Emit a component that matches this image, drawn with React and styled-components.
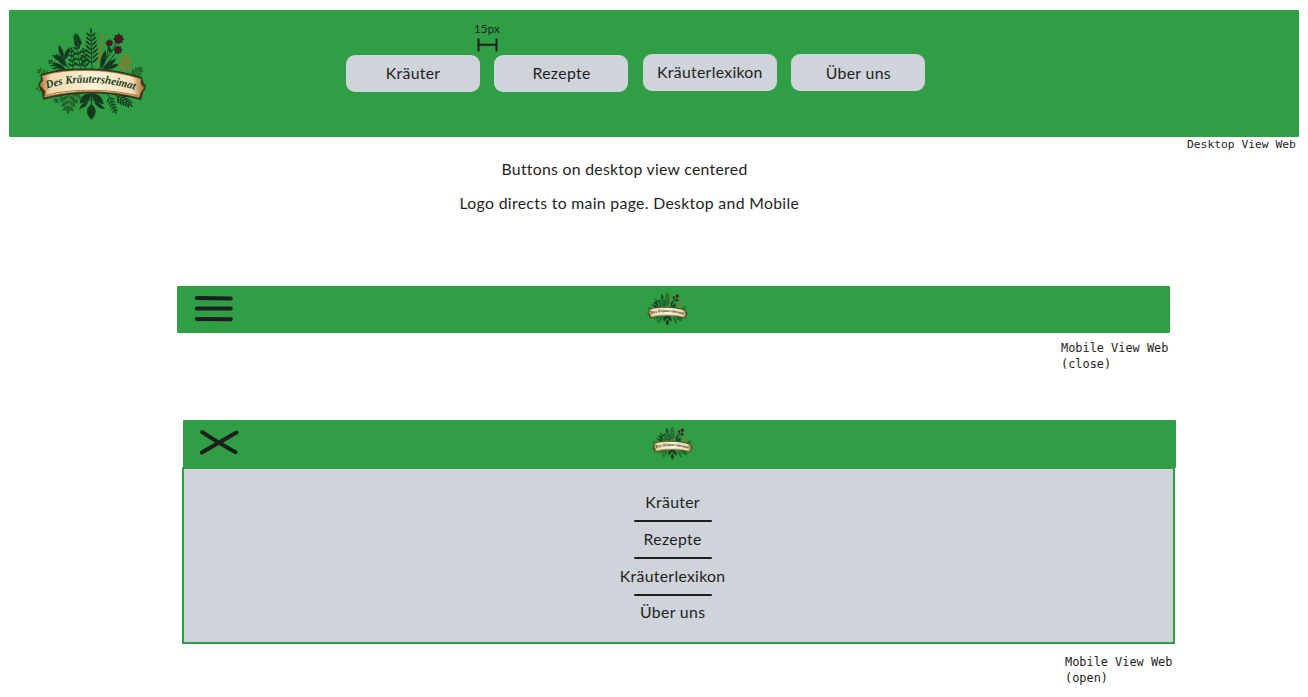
import React from "react";
import styled, { createGlobalStyle } from "styled-components";

const GREEN = "#2f9e44";
const GREY = "#ced4da";
const INK = "#1e1e1e";

const GlobalStyle = createGlobalStyle`
  * { box-sizing: border-box; }
  body { margin: 0; background: #fff; color: ${INK}; }
`;

const Board = styled.main`
  display: flex;
  flex-direction: column;
  width: 1308px;
  height: 697px;
  padding-top: 10px;
  overflow: hidden;
  font: 15.8px/20px Lato, sans-serif;
`;

const DesktopHeader = styled.header`
  display: flex;
  flex: none;
  align-items: flex-start;
  width: 1290px;
  height: 127px;
  margin-left: 9px;
  padding: 15px 0 0 24px;
  border-radius: 1px;
  background: ${GREEN};
`;

const LogoLink = styled.a`
  display: block;
  flex: none;
  width: ${(p) => p.$width}px;
  height: ${(p) => p.$width * 0.8406}px;
  svg { display: block; width: 100%; height: 100%; overflow: visible; }
`;

const Nav = styled.nav`
  position: relative;
  display: flex;
  gap: 14.4px;
  margin: 29.5px 0 0 198px;
`;

const NavButton = styled.button`
  width: 134px;
  height: 37px;
  margin: ${(p) => p.$lift || 0}px 0 0;
  padding: 0;
  border: 0;
  border-radius: 9px;
  background: ${GREY};
  color: ${INK};
  font: inherit;
  text-align: center;
`;

const Label = styled.span`
  letter-spacing: ${(p) => p.$track || 0}px;
  margin-right: ${(p) => -(p.$track || 0)}px;
  white-space: nowrap;
`;

const Measure = styled.div`
  position: absolute;
  left: 125.5px;
  top: -33px;
  width: 31px;
  display: flex;
  flex-direction: column;
  align-items: center;
  font-size: 11.5px;
  letter-spacing: 0.15px;
  line-height: 14px;
  svg { margin-top: 2px; }
`;

const Notes = styled.section`
  display: flex;
  flex: none;
  flex-direction: column;
  gap: 14px;
  width: 342px;
  height: 148.5px;
  margin-left: 459.5px;
  padding-top: 22px;
`;

const Note = styled.p`
  margin: 0 0 0 ${(p) => p.$indent || 0}px;
  white-space: nowrap;
`;

const Caption = styled.p`
  flex: none;
  width: 118px;
  height: ${(p) => p.$height}px;
  margin: 0 0 0 ${(p) => p.$left}px;
  padding-top: ${(p) => p.$top}px;
  font: ${(p) => p.$size || 11.9}px/16px "DejaVu Sans Mono", monospace;
  white-space: pre-line;
`;

const MobileBar = styled.header`
  display: flex;
  flex: none;
  align-items: flex-start;
  width: 993px;
  height: ${(p) => p.$height}px;
  margin-left: ${(p) => p.$left}px;
  padding-left: 17px;
  border-radius: 1px;
  background: ${GREEN};
`;

const IconButton = styled.button`
  display: block;
  width: 40px;
  height: 46px;
  padding: 0;
  border: 0;
  background: none;
  svg { display: block; }
`;

const BarLogo = styled.div`
  margin: 5.5px 0 0 411.3px;
`;

const Menu = styled.nav`
  display: flex;
  flex: none;
  flex-direction: column;
  align-items: center;
  width: 993px;
  height: 177px;
  margin: -1px 0 0 182px;
  padding: 23px 12px 0 0;
  border: 2px solid ${GREEN};
  background: ${GREY};
`;

const MenuItem = styled.a`
  height: 20px;
`;

const Divider = styled.hr`
  width: 78px;
  height: 2px;
  margin: 8.4px 0 6.4px;
  border: 0;
  border-radius: 1px;
  background: ${INK};
`;

function Leaf({ x, y, angle, length, width, fill }) {
  return (
    <path
      transform={`translate(${x} ${y}) rotate(${angle})`}
      d={`M0 0Q${length * 0.45} ${-width} ${length} 0Q${length * 0.45} ${width} 0 0`}
      fill={fill}
    />
  );
}

function Sprig({ from, to, pairs, length, width, spread = 48, fill, start = 0.2 }) {
  const dx = to[0] - from[0];
  const dy = to[1] - from[1];
  const heading = (Math.atan2(dy, dx) * 180) / Math.PI;
  const leaves = [];
  for (let i = 0; i < pairs; i++) {
    const t = start + ((0.92 - start) * i) / Math.max(1, pairs - 1);
    const size = length * (1.1 - 0.5 * t);
    [-1, 1].forEach((side) =>
      leaves.push(
        <Leaf key={`${i}${side}`} x={from[0] + dx * t} y={from[1] + dy * t}
          angle={heading + side * spread} length={size} width={width} fill={fill} />
      )
    );
  }
  return (
    <g>
      <path d={`M${from}L${to}`} stroke={fill} strokeWidth="2.5" />
      {leaves}
      <Leaf x={to[0]} y={to[1]} angle={heading} length={length * 0.6} width={width} fill={fill} />
    </g>
  );
}

function Blossom({ x, y, r }) {
  return (
    <g>
      {[0, 45, 90, 135, 180, 225, 270, 315].map((a) => (
        <Leaf key={a} x={x} y={y} angle={a} length={r} width={r * 0.6} fill="#3c2023" />
      ))}
      <circle cx={x} cy={y} r={r * 0.55} fill="#481b25" />
    </g>
  );
}

function Logo({ id, width }) {
  const dark = "#14391f";
  const mid = "#23642c";
  const rust = "#a4702a";
  return (
    <LogoLink $width={width} href="#" aria-label="Des Kräutersheimat">
      <svg viewBox="100 75 345 290" fill="none">
        <defs>
          <linearGradient id={`${id}-paper`} x1="120" x2="435" y1="0" y2="0" gradientUnits="userSpaceOnUse">
            <stop stopColor="#a46b36" />
            <stop offset=".1" stopColor="#f0d9ad" />
            <stop offset=".5" stopColor="#fff4d8" />
            <stop offset=".88" stopColor="#f3dfb9" />
            <stop offset="1" stopColor="#9b5f2c" />
          </linearGradient>
          <path id={`${id}-line`} d="M141 266C190 250 236 247 282 248C330 251 370 258 411 272" />
        </defs>
        <Sprig from={[150, 234]} to={[122, 214]} pairs={3} length={20} width={7} fill={mid} />
        <Sprig from={[395, 232]} to={[419, 211]} pairs={3} length={23} width={8} fill={mid} />
        <Sprig from={[128, 272]} to={[113, 266]} pairs={2} length={11} width={4} fill={mid} />
        <Sprig from={[428, 274]} to={[436, 256]} pairs={2} length={10} width={4} fill={mid} />
        <Sprig from={[188, 218]} to={[153, 186]} pairs={4} length={17} width={5} fill={dark} />
        <Leaf x={199} y={210} angle={-151} length={47} width={13} fill={dark} />
        <Leaf x={199} y={200} angle={-128} length={50} width={15} fill={dark} />
        <Leaf x={194} y={184} angle={-153} length={41} width={13} fill={dark} />
        <Leaf x={191} y={176} angle={-108} length={44} width={13} fill={dark} />
        <Leaf x={194} y={180} angle={-68} length={41} width={13} fill={dark} />
        <path d="M214 216Q196 192 189 168" stroke={dark} strokeWidth="3" />
        <Sprig from={[244, 212]} to={[231, 143]} pairs={4} length={25} width={6} fill={dark} />
        <Sprig from={[240, 146]} to={[229, 109]} pairs={6} length={17} width={6} fill={dark} />
        <Sprig from={[220, 212]} to={[215, 152]} pairs={4} length={18} width={6} fill={dark} />
        <Sprig from={[258, 212]} to={[251, 154]} pairs={4} length={19} width={6} fill={dark} />
        <Sprig from={[277, 212]} to={[274, 102]} pairs={7} length={32} width={6} spread={48} fill={dark} />
        <Sprig from={[294, 202]} to={[308, 103]} pairs={11} length={9} width={4} spread={20} fill={rust} />
        <path d="M298 208C315 180 337 160 355 118M307 205C321 176 326 153 328 130M310 208C326 187 340 168 356 150" stroke={dark} strokeWidth="3" />
        <Leaf x={303} y={205} angle={-75} length={58} width={14} fill={dark} />
        <Leaf x={308} y={209} angle={-38} length={54} width={13} fill={dark} />
        <Leaf x={314} y={209} angle={-21} length={48} width={12} fill={dark} />
        <Leaf x={336} y={159} angle={-120} length={24} width={9} fill={dark} />
        <Blossom x={357} y={117} r={17} />
        <Blossom x={329} y={129} r={12} />
        <Blossom x={355} y={150} r={14} />
        <Sprig from={[372, 218]} to={[380, 177]} pairs={3} length={31} width={6} spread={56} fill="#b56b25" />
        <Sprig from={[208, 276]} to={[206, 322]} pairs={3} length={36} width={11} fill={mid} />
        <Sprig from={[190, 286]} to={[172, 300]} pairs={2} length={18} width={8} fill={mid} />
        <Sprig from={[239, 278]} to={[228, 300]} pairs={2} length={22} width={9} fill={mid} />
        <Sprig from={[325, 283]} to={[346, 333]} pairs={5} length={18} width={5} fill={dark} />
        <Sprig from={[345, 284]} to={[388, 312]} pairs={5} length={24} width={6} fill={dark} />
        <path d="M275 278V343M275 296L239 328M275 296L314 326" stroke={dark} strokeWidth="3" />
        <Leaf x={275} y={280} angle={139} length={47} width={21} fill={dark} />
        <Leaf x={275} y={280} angle={41} length={50} width={21} fill={dark} />
        <Leaf x={265} y={307} angle={145} length={32} width={11} fill={dark} />
        <Leaf x={283} y={306} angle={34} length={39} width={11} fill={dark} />
        <Leaf x={275} y={312} angle={90} length={47} width={26} fill={dark} />
        <path d="M125 224C180 206 225 207 275 207C330 208 383 219 425 232L429 245L437 262L429 277L423 299C377 286 330 279 277 279C224 279 178 285 131 298L129 278L116 253L125 241Z" fill="#573216" stroke="#153c20" strokeWidth="3" />
        <path d="M128 228C180 211 225 212 275 212C330 213 381 223 422 237L423 253L432 263L422 278L418 292C375 281 330 274 277 274C224 274 180 280 135 291L138 274L121 254L131 242Z" fill={`url(#${id}-paper)`} stroke="#c69155" strokeWidth="2" />
        <path d="M137 287C182 273 230 271 278 271C330 271 373 277 416 288" stroke="#a77842" strokeWidth="3" />
        <text fill="#173d1d" fontFamily="Liberation Serif, serif" fontSize="34" fontStyle="italic" fontWeight="700">
          <textPath href={`#${id}-line`} textLength="268" lengthAdjust="spacingAndGlyphs">Des Kräutersheimat</textPath>
        </text>
      </svg>
    </LogoLink>
  );
}

const pages = [
  { name: "Kräuter", track: 0.3 },
  { name: "Rezepte", track: 0.35 },
  { name: "Kräuterlexikon", track: 0.3, lift: -0.7 },
  { name: "Über uns", track: 0.35, lift: -0.3 },
];

export default function App() {
  return (
    <>
      <GlobalStyle />
      <Board>
        <DesktopHeader>
          <Logo id="desktop" width={115} />
          <Nav>
            {pages.map((p) => (
              <NavButton key={p.name} $lift={p.lift}>
                <Label $track={p.track}>{p.name}</Label>
              </NavButton>
            ))}
            <Measure>
              15px
              <svg width="21" height="14" fill="none" stroke={INK} strokeWidth="2" strokeLinecap="round">
                <path d="M1.5 1.2V12.5M19.5 1.2V12.5M1.5 6.8H19.5" />
              </svg>
            </Measure>
          </Nav>
        </DesktopHeader>
        <Caption $left={1187} $top={0} $height={0} $size={11.3}>Desktop View Web</Caption>
        <Notes>
          <Note $indent={42}><Label $track={0.28}>Buttons on desktop view centered</Label></Note>
          <Note><Label $track={0.32}>Logo directs to main page. Desktop and Mobile</Label></Note>
        </Notes>

        <MobileBar $left={177.4} $height={47.5}>
          <IconButton aria-label="Open menu">
            <svg width="40" height="46" fill="none" stroke={INK} strokeWidth="4" strokeLinecap="round">
              <path d="M2.8 12L36.8 12.4M2.8 22.5H36.8M2.8 32.9L36.8 33.2" />
            </svg>
          </IconButton>
          <BarLogo><Logo id="closed" width={42} /></BarLogo>
        </MobileBar>
        <Caption $left={1061} $top={7} $height={86.5}>{"Mobile View Web\n(close)"}</Caption>

        <MobileBar $left={182.7} $height={48.5}>
          <IconButton aria-label="Close menu">
            <svg width="40" height="46" fill="none" stroke={INK} strokeWidth="4" strokeLinecap="round">
              <path d="M2.2 12.2Q17.5 22.5 35.5 32.2M36.5 12.5L1.8 32.5" />
            </svg>
          </IconButton>
          <BarLogo><Logo id="open" width={42} /></BarLogo>
        </MobileBar>
        <Menu>
          {pages.map((p, i) => (
            <React.Fragment key={p.name}>
              {i > 0 && <Divider />}
              <MenuItem><Label $track={p.track}>{p.name}</Label></MenuItem>
            </React.Fragment>
          ))}
        </Menu>
        <Caption $left={1065} $top={10} $height={50}>{"Mobile View Web\n(open)"}</Caption>
      </Board>
    </>
  );
}
